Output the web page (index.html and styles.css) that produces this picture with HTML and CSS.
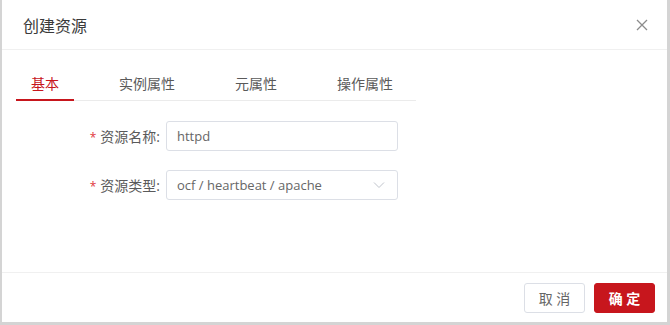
FILE: index.html
```html
<!DOCTYPE html>
<html>
<head>
    <link rel="stylesheet" href="styles.css">
</head>
<body>
    <div class="dialog">
        <div class="dialog-header">
            <span class="dialog-title">创建资源</span>
            <button class="close-btn">
                <svg width="12" height="12" viewBox="0 0 12 12"><path d="M1 1L11 11M11 1L1 11" stroke="#8c8c8c" stroke-width="1.3" fill="none"/></svg>
            </button>
        </div>

        <div class="dialog-body">
            <div class="tabs">
                <div class="tab active">基本</div>
                <div class="tab">实例属性</div>
                <div class="tab">元属性</div>
                <div class="tab">操作属性</div>
            </div>

            <div class="form">
                <div class="form-row">
                    <label class="form-label"><span class="required">*</span>资源名称:</label>
                    <div class="input">httpd</div>
                </div>
                <div class="form-row">
                    <label class="form-label"><span class="required">*</span>资源类型:</label>
                    <div class="input select">
                        <span>ocf / heartbeat / apache</span>
                        <svg width="12" height="8" viewBox="0 0 12 8"><path d="M1 1.5L6 6.5L11 1.5" stroke="#c0c4cc" stroke-width="1" fill="none"/></svg>
                    </div>
                </div>
            </div>
        </div>

        <div class="dialog-footer">
            <button class="btn btn-cancel">取 消</button>
            <button class="btn btn-primary">确 定</button>
        </div>
    </div>
</body>
</html>
```

FILE: styles.css
```css
body {
    margin: 0;
    background-color: #ffffff;
    font-family: "Open Sans", "Noto Sans CJK SC", sans-serif;
}

.dialog {
    width: 670px;
    height: 325px;
    box-sizing: border-box;
    display: flex;
    flex-direction: column;
    background-color: #ffffff;
    border-left: 2px solid #d4d4d4;
    border-right: 3px solid #d4d4d4;
    border-bottom: 3px solid #d4d4d4;
}

.dialog-header {
    height: 50px;
    box-sizing: border-box;
    display: flex;
    align-items: center;
    justify-content: space-between;
    padding: 0 19px 0 21px;
    border-bottom: 1px solid #f0f0f0;
}

.dialog-title {
    font-size: 16px;
    color: #3a3a3a;
}

.close-btn {
    border: none;
    background: none;
    padding: 0;
    width: 12px;
    height: 12px;
    display: flex;
    cursor: pointer;
}

.dialog-body {
    flex: 1;
    padding: 21px 0 0 14px;
}

.tabs {
    display: flex;
    gap: 30px;
    width: 400px;
    border-bottom: 1px solid #ebebeb;
}

.tab {
    padding: 0 15px;
    height: 28px;
    line-height: 26px;
    font-size: 14px;
    color: #5a5a5a;
    border-bottom: 2px solid transparent;
    margin-bottom: -1px;
}

.tab.active {
    color: #c7161d;
    border-bottom-color: #c7161d;
}

.form {
    padding-top: 20px;
    display: flex;
    flex-direction: column;
    gap: 19px;
}

.form-row {
    display: flex;
    align-items: center;
}

.form-label {
    width: 150px;
    text-align: right;
    font-size: 14px;
    color: #5a5a5a;
    padding-right: 6px;
    box-sizing: border-box;
}

.required {
    color: #e0363d;
    margin-right: 4px;
    font-size: 12px;
}

.input {
    width: 232px;
    height: 30px;
    box-sizing: border-box;
    border: 1px solid #dcdfe6;
    border-radius: 3px;
    padding: 0 10px;
    font-size: 13px;
    color: #666666;
    line-height: 28px;
}

.select {
    display: flex;
    align-items: center;
    justify-content: space-between;
    padding-right: 12px;
}

.dialog-footer {
    height: 50px;
    box-sizing: border-box;
    display: flex;
    justify-content: flex-end;
    align-items: flex-start;
    gap: 9px;
    padding: 10px 12px 0 0;
    border-top: 1px solid #f0f0f0;
}

.btn {
    width: 61px;
    height: 30px;
    border-radius: 3px;
    font-size: 14px;
    font-family: "Open Sans", "Noto Sans CJK SC", sans-serif;
    cursor: pointer;
}

.btn-cancel {
    background-color: #ffffff;
    border: 1px solid #dcdfe6;
    color: #666666;
}

.btn-primary {
    background-color: #c7161d;
    border: 1px solid #c7161d;
    color: #ffffff;
    font-weight: bold;
}
```
